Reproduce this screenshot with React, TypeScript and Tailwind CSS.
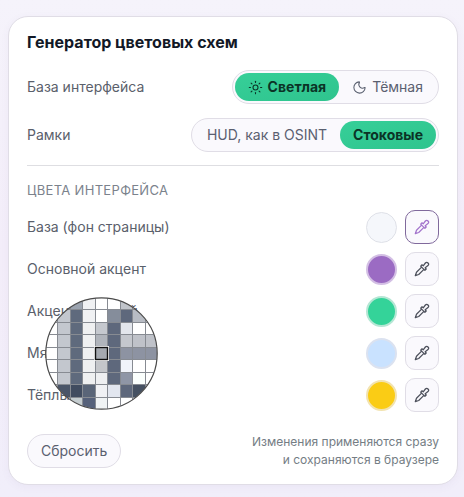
import { useState } from "react";
import { Moon, Sun } from "lucide-react";
import clsx from "clsx";

interface SchemeColor {
  id: string;
  label: string;
  value: string;
  swatch: string;
}

const COLORS: SchemeColor[] = [
  { id: "base", label: "База (фон страницы)", value: "#f5f7fb", swatch: "border bg-[#f5f7fb] border-[#dfe1e8]" },
  { id: "primary", label: "Основной акцент", value: "#9b6bc3", swatch: "border-2 bg-[#9b6bc3] border-[#d3bfe4]" },
  { id: "accent", label: "Акцент зелёный", value: "#34d399", swatch: "border-2 bg-[#34d399] border-[#b5e6d4]" },
  { id: "soft", label: "Мягкий акцент", value: "#c9e2ff", swatch: "border-2 bg-[#c9e2ff] border-[#dbe2f0]" },
  { id: "warm", label: "Тёплый акцент", value: "#facc15", swatch: "border-2 bg-[#facc15] border-[#f2e3b0]" },
];

// 9×9 pixels under the cursor, row by row
const PIXELS = [
  ["#fff", "#c5c9d0", "#9ba3af", "#f0f1f3", "#fff", "#fff", "#c0c4ca", "#fff", "#fff"],
  ["#fff", "#c3c7ce", "#5f6a7d", "#f0f1f3", "#fff", "#858d9b", "#5e687c", "#b8bcc4", "#fff"],
  ["#fff", "#c3c7ce", "#5f6a7d", "#eff0f1", "#c5c8ce", "#5e687c", "#e3e6ec", "#fff", "#fff"],
  ["#fff", "#c3c7ce", "#5f6a7d", "#eff0f1", "#b0b4bb", "#5e687c", "#c4c7cd", "#bfc2c9", "#bfc2c9"],
  ["#fff", "#c3c7ce", "#5f6a7d", "#eff0f1", "#a5a9b0", "#5e687c", "#8d93a2", "#8d93a2", "#8d93a2"],
  ["#fff", "#c3c7ce", "#5f6a7d", "#eff0f1", "#c4c6ca", "#5e687c", "#f1f4fa", "#fff", "#fff"],
  ["#fff", "#c3c7ce", "#5f6a7d", "#eff0f1", "#eeeff1", "#5e687c", "#8f96a6", "#fbfffd", "#fff"],
  ["#fff", "#4a5568", "#414c60", "#5a6578", "#f0f1f4", "#e2e6ef", "#5e687c", "#465162", "#fff"],
  ["#fff", "#fff", "#c5cdd0", "#56617a", "#f0f3f4", "#fff", "#fff", "#fff", "#fff"],
];

const CELL = 12.5;
const GRID = [1, 2, 3, 4, 5, 6, 7, 8];

function Loupe() {
  return (
    <svg viewBox="0 0 113 113" className="pointer-events-none absolute top-[280px] left-9 size-[113px]" aria-hidden="true">
      <defs>
        <clipPath id="lens"><circle cx="56.5" cy="56.5" r="55.5" /></clipPath>
      </defs>
      <g clipPath="url(#lens)" shapeRendering="crispEdges">
        {PIXELS.map((row, y) => row.map((fill, x) => (
          <rect key={`${x}-${y}`} x={x * CELL} y={y * CELL} width={13} height={13} fill={fill} />
        )))}
        {GRID.map((n) => (
          <path key={n} d={`M${n * CELL} 0V113M0 ${n * CELL}H113`} stroke="#878b92" strokeWidth="1" />
        ))}
      </g>
      <rect x="49.5" y="49.5" width="14" height="14" fill="none" stroke="#fff" />
      <rect x="50.5" y="50.5" width="12" height="12" fill="none" stroke="#111" strokeWidth="1.4" />
      <circle cx="56.5" cy="56.5" r="55.7" fill="none" stroke="#4a4a4a" strokeWidth="1.2" />
    </svg>
  );
}

function Dropper() {
  return (
    <svg viewBox="0 0 16 16" className="size-4" fill="none" stroke="currentColor" strokeWidth="1.25" strokeLinecap="round" strokeLinejoin="round" aria-hidden="true">
      <path d="M8 3.8l1.2 1 2.2-2.8a1.75 1.75 0 0 1 2.6 2.6l-2.8 2.2 1 1.2-1.3 1.3-1-.9-2.3-2.3-.9-1z" />
      <path d="M7.6 6.1l-5.1 5.2-1.2 3.4 3.4-1.2 5.2-5.1" />
    </svg>
  );
}

interface SegmentProps {
  active: boolean;
  onClick: () => void;
  children: React.ReactNode;
}

function Segment({ active, onClick, children }: SegmentProps) {
  return (
    <button
      type="button"
      aria-pressed={active}
      onClick={onClick}
      className={clsx(
        "flex h-7 items-center gap-[5px] rounded-full px-[13px] text-sm",
        active ? "bg-linear-to-br from-[#36cf98] to-[#2fc48e] font-bold text-[#0b3326]" : "text-[#5a6070]",
      )}
    >
      {children}
    </button>
  );
}

export default function App() {
  const [theme, setTheme] = useState<"light" | "dark">("light");
  const [frames, setFrames] = useState<"hud" | "stock">("stock");
  const [picking, setPicking] = useState("base");

  return (
    <div className="min-h-screen bg-linear-to-b from-[#f5f3fb] via-[#f3edf9] to-[#f1eefa] pt-4 pr-1.5 pb-3 pl-2 font-['Inter','Noto_Sans',sans-serif] text-sm text-[#5a606b]">
      <section className="relative rounded-[20px] border border-[#e0dde6] bg-white px-[18px] py-[15px] shadow-[0_2px_8px_rgba(90,70,140,0.05)]">
        <h2 className="text-base leading-5 font-bold text-[#121826]">Генератор цветовых схем</h2>

        <div className="mt-[18px] flex flex-col gap-3.5">
          <div className="flex items-center justify-between">
            <span>База интерфейса</span>
            <div role="group" aria-label="База интерфейса" className="flex rounded-full border border-[#e0dde6] bg-[#faf9fd] p-0.5">
              <Segment active={theme === "light"} onClick={() => setTheme("light")}><Sun className="size-[15px]" strokeWidth={1.7} />Светлая</Segment>
              <Segment active={theme === "dark"} onClick={() => setTheme("dark")}><Moon className="size-[15px]" strokeWidth={1.7} />Тёмная</Segment>
            </div>
          </div>
          <div className="flex items-center justify-between">
            <span>Рамки</span>
            <div role="group" aria-label="Рамки" className="flex rounded-full border border-[#e0dde6] bg-[#faf9fd] p-0.5">
              <Segment active={frames === "hud"} onClick={() => setFrames("hud")}>HUD, как в OSINT</Segment>
              <Segment active={frames === "stock"} onClick={() => setFrames("stock")}>Стоковые</Segment>
            </div>
          </div>
        </div>

        <hr className="mt-[13px] border-[#dedee2]" />

        <h3 className="mt-3.5 text-[13px] leading-5 tracking-wide text-[#7b828c] uppercase">Цвета интерфейса</h3>
        <div className="mt-2.5 flex flex-col gap-2">
          {COLORS.map((c) => (
            <div key={c.id} className="flex items-center gap-2">
              <label htmlFor={c.id} className="mr-auto">{c.label}</label>
              <span className={clsx("relative size-[31px] rounded-full", c.swatch)}>
                <input id={c.id} type="color" defaultValue={c.value} className="absolute inset-0 size-full cursor-pointer opacity-0" />
              </span>
              <button
                type="button"
                aria-label={`Пипетка: ${c.label}`}
                onClick={() => setPicking(c.id)}
                className={clsx(
                  "flex size-[34px] items-center justify-center rounded-[10px] border bg-[#faf9fd]",
                  picking === c.id ? "border-[#80699c] text-[#a374cc]" : "border-[#e0dde6] text-[#4d515c]",
                )}
              >
                <Dropper />
              </button>
            </div>
          ))}
        </div>

        <div className="mt-[21px] flex items-center justify-between">
          <button type="button" className="h-[34px] rounded-full border border-[#e0dde6] bg-[#faf9fd] px-[13px] text-[#5a6070]">Сбросить</button>
          <p className="text-right text-xs leading-[18px] text-[#747d84]">
            Изменения применяются сразу<br />и сохраняются в браузере
          </p>
        </div>

        <Loupe />
      </section>
    </div>
  );
}
